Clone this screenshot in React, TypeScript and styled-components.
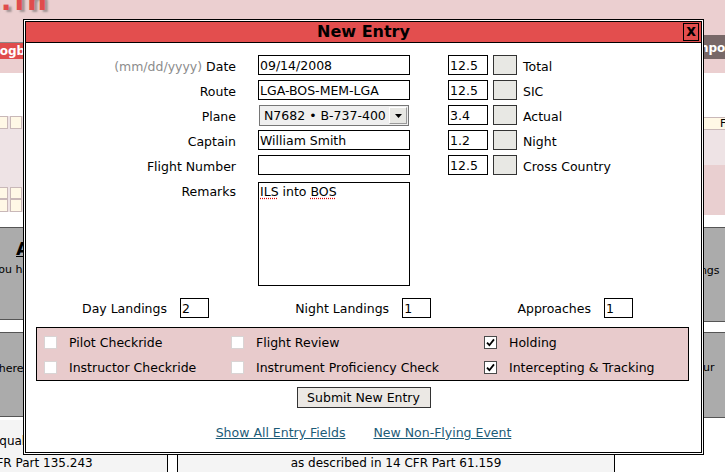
import React from "react";
import styled, { createGlobalStyle } from "styled-components";

const GlobalStyle = createGlobalStyle`
  html, body {
    margin: 0;
    padding: 0;
    background: #ffffff;
  }
  body {
    font-family: "DejaVu Sans", "Bitstream Vera Sans", sans-serif;
  }
  * {
    box-sizing: border-box;
  }
`;

const Page = styled.div`
  position: relative;
  width: 725px;
  height: 472px;
  overflow: hidden;
  background: #ffffff;
  font-size: 12px;
  color: #000;
`;

/* ---------- page behind the dialog ---------- */

const Header = styled.header`
  height: 38px;
  background: #ebcfd0;
  overflow: hidden;
`;

const LogoWrap = styled.div`
  display: flex;
  justify-content: flex-end;
  width: 50px;
  white-space: nowrap;
`;

const Logo = styled.div`
  margin-top: -13px;
  font: bold 28px "DejaVu Sans", sans-serif;
  line-height: 28px;
  letter-spacing: 3px;
  color: #e04c4c;
  text-shadow: 3px 2px 2px #a29595;
`;

const Nav = styled.nav`
  display: flex;
  justify-content: space-between;
  height: 21px;
  background: #ebcfd0;
  white-space: nowrap;
`;

const NavTab = styled.div<{ $active?: boolean }>`
  display: flex;
  align-items: center;
  padding: 0 8px;
  margin: ${(p) => (p.$active ? "4px 0 0 -16px" : "-3px -20px 0 0")};
  background: ${(p) => (p.$active ? "#e04c4c" : "#786868")};
  border-top: 1px solid ${(p) => (p.$active ? "#8a8a8a" : "#786868")};
  color: #ffffff;
  font-weight: bold;
  font-size: 12px;
`;

const Body = styled.div`
  display: flex;
  justify-content: space-between;
  height: 361px;
`;

const SideColumn = styled.div<{ $width: number; $offset: number }>`
  display: flex;
  flex-direction: column;
  width: ${(p) => p.$width}px;
  margin-left: ${(p) => p.$offset}px;
  margin-right: ${(p) => (p.$offset < 0 ? 0 : -20)}px;
  white-space: nowrap;
`;

const Band = styled.div<{ $h: number; $bg: string }>`
  height: ${(p) => p.$h}px;
  background: ${(p) => p.$bg};
  flex-shrink: 0;
`;

const CalRow = styled.div<{ $h: number }>`
  display: flex;
  gap: 2px;
  height: ${(p) => p.$h}px;
  background: #eee3e5;
  flex-shrink: 0;
`;

const CalCell = styled.div<{ $w: number; $pad?: number }>`
  width: ${(p) => p.$w}px;
  background: #fff8e6;
  border: 1px solid #c9b8b8;
  font-size: 11px;
  line-height: 11px;
  padding-left: ${(p) => p.$pad || 0}px;
  overflow: hidden;
`;

const GreyBox = styled.div<{ $h: number }>`
  display: flex;
  flex-direction: column;
  height: ${(p) => p.$h}px;
  background: #ababab;
  border-top: 1px solid #555;
  border-bottom: 1px solid #555;
  font-size: 11px;
  flex-shrink: 0;
`;

const BoxHeading = styled.div`
  margin: 10px 0 0 76px;
  font-size: 18px;
  font-weight: bold;
  text-decoration: underline;
`;

const BoxText = styled.div<{ $pad: number; $top: number }>`
  margin: ${(p) => p.$top}px 0 0 ${(p) => p.$pad}px;
`;

const Footer = styled.div`
  display: grid;
  grid-template-columns: 167px 11px 436px 1fr;
  height: 52px;
`;

const FooterCell = styled.div<{ $align?: string }>`
  background: #f4f4f4;
  padding-top: 10px;
  line-height: 22px;
  font-size: 12px;
  text-align: ${(p) => p.$align || "center"};
  white-space: nowrap;
  overflow: hidden;
`;

const FooterLine = styled.div<{ $shift?: number }>`
  margin-left: ${(p) => p.$shift || 0}px;
`;

const FooterGap = styled.div`
  border-left: 1px solid #000;
  border-right: 1px solid #000;
  background: #ffffff;
`;

const FooterEnd = styled.div`
  border-left: 1px solid #000;
  background: #ffffff;
`;

/* ---------- dialog ---------- */

const Modal = styled.div`
  position: absolute;
  left: 23px;
  top: 19px;
  width: 681px;
  height: 436px;
  border: 3px double #000;
  background: #ffffff;
  display: flex;
  flex-direction: column;
  font-size: 12.5px;
`;

const TitleBar = styled.div`
  display: grid;
  grid-template-columns: 1fr auto 1fr;
  align-items: center;
  height: 21px;
  padding: 0 2px;
  background: #e34e4e;
  border-bottom: 1px solid #000;
`;

const Title = styled.h1`
  grid-column: 2;
  margin: 0;
  font: bold 16px "DejaVu Sans", sans-serif;
  line-height: 20px;
`;

const CloseButton = styled.button`
  grid-column: 3;
  justify-self: end;
  width: 16px;
  height: 18px;
  padding: 0 0 3px;
  border: 1px solid #000;
  background: transparent;
  font: bold 15px "DejaVu Sans", sans-serif;
  line-height: 12px;
  color: #000;
`;

const Content = styled.div`
  display: flex;
  flex-direction: column;
  padding-top: 12px;
`;

const TopSection = styled.div`
  display: flex;
  gap: 38px;
  align-items: flex-start;
`;

const FormGrid = styled.div`
  display: grid;
  grid-template-columns: 210px 152px;
  column-gap: 22px;
  row-gap: 5px;
  align-items: start;
`;

const Label = styled.div`
  height: 20px;
  text-align: right;
  line-height: 24px;
  white-space: nowrap;
`;

const Hint = styled.span`
  color: #8c8c8c;
`;

const TextInput = styled.input<{ $w?: number }>`
  display: block;
  width: ${(p) => (p.$w ? `${p.$w}px` : "100%")};
  height: 20px;
  margin: 0;
  padding: 0 1px;
  border: 1px solid #000;
  background: #ffffff;
  font: 12.5px "DejaVu Sans", sans-serif;
  color: #000;
  outline: none;
`;

const SelectBox = styled.div`
  display: flex;
  align-items: center;
  width: 150px;
  height: 21px;
  margin: 0 0 -1px 1px;
  border: 1px solid #767676;
  background: #efefef;
  white-space: nowrap;
`;

const SelectText = styled.span`
  flex: 1;
  padding-left: 4px;
`;

const SelectArrow = styled.span`
  display: flex;
  align-items: center;
  justify-content: center;
  width: 18px;
  height: 17px;
  margin-right: 1px;
  background: #e7e7e3;
  border: 1px solid;
  border-color: #ffffff #9a9a9a #9a9a9a #ffffff;
`;

const RemarksBox = styled.div`
  height: 104px;
  margin-top: 2px;
  padding: 1px 1px;
  border: 1px solid #000;
  line-height: 15px;
`;

const Misspelled = styled.span`
  text-decoration: underline dotted #e00000;
  text-underline-offset: 2px;
`;

const TimesGrid = styled.div`
  display: grid;
  grid-template-columns: 40px 24px auto;
  column-gap: 5px;
  row-gap: 5px;
  grid-auto-rows: 20px;
`;

const ComputeBox = styled.span`
  display: block;
  height: 20px;
  background: #e8e8e4;
  border: 1px solid #333;
`;

const TimeLabel = styled.span`
  line-height: 24px;
  margin-left: 1px;
  white-space: nowrap;
`;

const LandingsRow = styled.div`
  display: flex;
  justify-content: space-between;
  align-items: center;
  margin: 12px 68px 0 56px;
`;

const LandingGroup = styled.div`
  display: flex;
  align-items: center;
  gap: 13px;
  white-space: nowrap;
`;

const EventsPanel = styled.div`
  display: grid;
  grid-template-columns: 187px 253px 1fr;
  grid-auto-rows: 20px;
  row-gap: 5px;
  margin: 9px 12px 0 10px;
  padding: 4px 0 3px 7px;
  border: 1px solid #000;
  background: #e8cbcc;
`;

const CheckItem = styled.label`
  display: flex;
  align-items: center;
  gap: 12px;
  white-space: nowrap;
`;

const CheckBox = styled.span<{ $checked?: boolean }>`
  display: flex;
  align-items: center;
  justify-content: center;
  width: 13px;
  height: 13px;
  background: #ffffff;
  border: 1px solid ${(p) => (p.$checked ? "#4a4a4a" : "#d9d4d4")};
`;

const SubmitButton = styled.button`
  align-self: center;
  width: 134px;
  height: 21px;
  margin-top: 6px;
  padding: 0;
  border: 1px solid #333;
  background: #ebe8e4;
  font: 12.5px "DejaVu Sans", sans-serif;
  color: #000;
`;

const LinksRow = styled.div`
  display: flex;
  justify-content: center;
  gap: 28px;
  margin-top: 17px;
`;

const Link = styled.a`
  color: #1c5b77;
  text-decoration: underline;
  line-height: 15px;
  cursor: pointer;
`;

const Check = () => (
  <svg width="9" height="9" viewBox="0 0 9 9">
    <path d="M1 4.6 L3.4 7.2 L8 1.4" fill="none" stroke="#000" strokeWidth="1.8" />
  </svg>
);

const Arrow = () => (
  <svg width="7" height="4" viewBox="0 0 7 4">
    <path d="M0 0 H7 L3.5 4 Z" fill="#000" />
  </svg>
);

const times = [
  { value: "12.5", label: "Total" },
  { value: "12.5", label: "SIC" },
  { value: "3.4", label: "Actual" },
  { value: "1.2", label: "Night" },
  { value: "12.5", label: "Cross Country" },
];

const landings = [
  { label: "Day Landings", value: "2" },
  { label: "Night Landings", value: "1" },
  { label: "Approaches", value: "1" },
];

const events = [
  { label: "Pilot Checkride", checked: false },
  { label: "Flight Review", checked: false },
  { label: "Holding", checked: true },
  { label: "Instructor Checkride", checked: false },
  { label: "Instrument Proficiency Check", checked: false },
  { label: "Intercepting & Tracking", checked: true },
];

const calWidths = [68, 12, 14, 14, 14];

const Background = () => (
  <>
    <Header>
      <LogoWrap>
        <Logo>FlightLogg.in</Logo>
      </LogoWrap>
    </Header>
    <Nav>
      <NavTab $active>Logbook</NavTab>
      <NavTab>Import</NavTab>
    </Nav>
    <Body>
      <SideColumn $width={170} $offset={-60}>
        <Band $h={14} $bg="#ebcfd0" />
        <Band $h={43} $bg="#ffffff" />
        <CalRow $h={13}>
          {calWidths.map((w, i) => (
            <CalCell key={i} $w={w} />
          ))}
        </CalRow>
        <Band $h={58} $bg="#eee3e5" />
        <CalRow $h={12}>
          {calWidths.map((w, i) => (
            <CalCell key={i} $w={w} />
          ))}
        </CalRow>
        <CalRow $h={13}>
          {calWidths.map((w, i) => (
            <CalCell key={i} $w={w} />
          ))}
        </CalRow>
        <Band $h={15} $bg="#ffffff" />
        <GreyBox $h={93}>
          <BoxHeading>Alerts</BoxHeading>
          <BoxText $pad={53} $top={4}>
            You have no alerts
          </BoxText>
        </GreyBox>
        <Band $h={12} $bg="#ffffff" />
        <GreyBox $h={85}>
          <BoxText $pad={29} $top={29}>
            Click here
          </BoxText>
        </GreyBox>
      </SideColumn>
      <SideColumn $width={80} $offset={0}>
        <Band $h={14} $bg="#ebcfd0" />
        <Band $h={44} $bg="#ffffff" />
        <CalRow $h={13}>
          <CalCell $w={80} $pad={54}>
            F
          </CalCell>
        </CalRow>
        <Band $h={35} $bg="#eee3e5" />
        <Band $h={50} $bg="#e9cfd0" />
        <Band $h={12} $bg="#ffffff" />
        <GreyBox $h={95}>
          <BoxText $pad={5} $top={36}>
            Landings
          </BoxText>
        </GreyBox>
        <Band $h={10} $bg="#ffffff" />
        <GreyBox $h={86}>
          <BoxText $pad={23} $top={28}>
            Hour
          </BoxText>
        </GreyBox>
      </SideColumn>
    </Body>
    <Footer>
      <FooterCell $align="left">
        <FooterLine $shift={-72}>adequately qualified</FooterLine>
        <FooterLine $shift={-31}>14 CFR Part 135.243</FooterLine>
      </FooterCell>
      <FooterGap />
      <FooterCell>
        <FooterLine>&nbsp;</FooterLine>
        <FooterLine>as described in 14 CFR Part 61.159</FooterLine>
      </FooterCell>
      <FooterEnd />
    </Footer>
  </>
);

const NewEntryDialog = () => (
  <Modal>
    <TitleBar>
      <Title>New Entry</Title>
      <CloseButton>x</CloseButton>
    </TitleBar>
    <Content>
      <TopSection>
        <FormGrid>
          <Label>
            <Hint>(mm/dd/yyyy)</Hint> Date
          </Label>
          <TextInput defaultValue="09/14/2008" />
          <Label>Route</Label>
          <TextInput defaultValue="LGA-BOS-MEM-LGA" />
          <Label>Plane</Label>
          <SelectBox>
            <SelectText>N7682 • B-737-400</SelectText>
            <SelectArrow>
              <Arrow />
            </SelectArrow>
          </SelectBox>
          <Label>Captain</Label>
          <TextInput defaultValue="William Smith" />
          <Label>Flight Number</Label>
          <TextInput defaultValue="" />
          <Label>Remarks</Label>
          <RemarksBox>
            <Misspelled>ILS</Misspelled> into <Misspelled>BOS</Misspelled>
          </RemarksBox>
        </FormGrid>
        <TimesGrid>
          {times.map((t) => (
            <React.Fragment key={t.label}>
              <TextInput defaultValue={t.value} />
              <ComputeBox />
              <TimeLabel>{t.label}</TimeLabel>
            </React.Fragment>
          ))}
        </TimesGrid>
      </TopSection>
      <LandingsRow>
        {landings.map((l) => (
          <LandingGroup key={l.label}>
            <span>{l.label}</span>
            <TextInput $w={29} defaultValue={l.value} />
          </LandingGroup>
        ))}
      </LandingsRow>
      <EventsPanel>
        {events.map((e) => (
          <CheckItem key={e.label}>
            <CheckBox $checked={e.checked}>{e.checked && <Check />}</CheckBox>
            {e.label}
          </CheckItem>
        ))}
      </EventsPanel>
      <SubmitButton>Submit New Entry</SubmitButton>
      <LinksRow>
        <Link>Show All Entry Fields</Link>
        <Link>New Non-Flying Event</Link>
      </LinksRow>
    </Content>
  </Modal>
);

const App = () => (
  <>
    <GlobalStyle />
    <Page>
      <Background />
      <NewEntryDialog />
    </Page>
  </>
);

export default App;
